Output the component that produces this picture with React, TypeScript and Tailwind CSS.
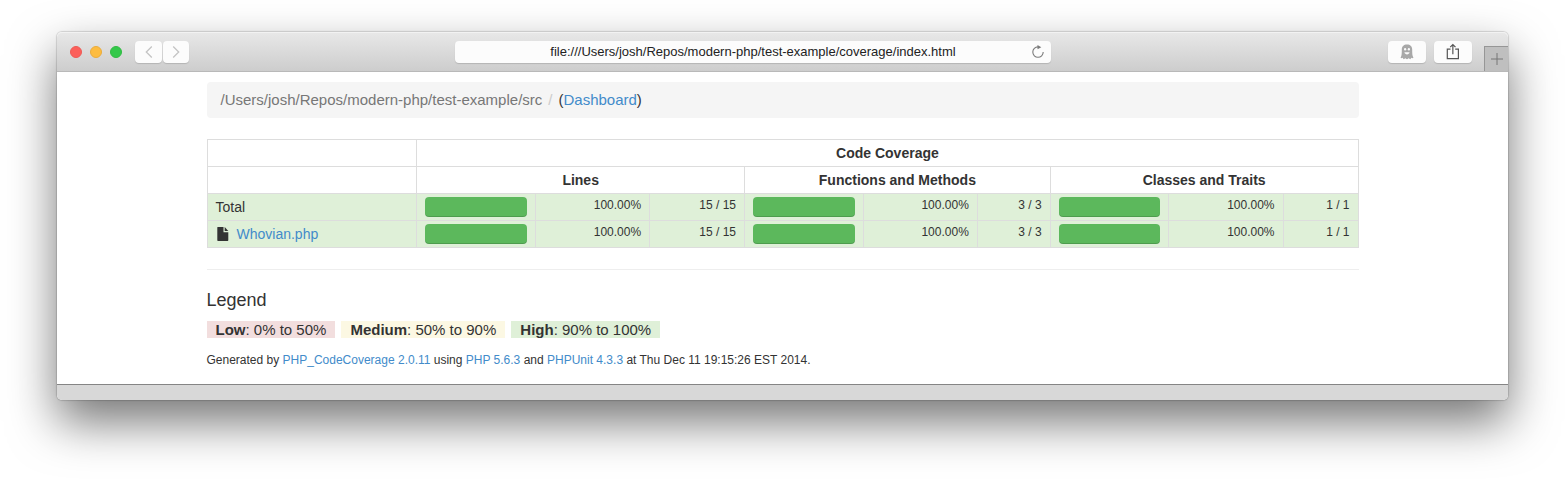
import React from "react";

type Metric = { percent: number; count: string };
type Row = { name: string; file: boolean; metrics: Metric[] };

const rows: Row[] = [
  {
    name: "Total",
    file: false,
    metrics: [
      { percent: 100, count: "15 / 15" },
      { percent: 100, count: "3 / 3" },
      { percent: 100, count: "1 / 1" },
    ],
  },
  {
    name: "Whovian.php",
    file: true,
    metrics: [
      { percent: 100, count: "15 / 15" },
      { percent: 100, count: "3 / 3" },
      { percent: 100, count: "1 / 1" },
    ],
  },
];

const columnShares = [210, 119, 114, 95, 119, 114, 73, 118, 115, 75];
const shareTotal = columnShares.reduce((sum, share) => sum + share, 0);

const link = "text-[#428bca] hover:underline";
const toolButton =
  "flex h-[22px] items-center justify-center rounded bg-[#fcfcfc] shadow-[0_1px_1px_rgba(0,0,0,0.14)]";

function GhostIcon() {
  return (
    <svg width="14" height="16" viewBox="0 0 14 16" aria-hidden="true">
      <path
        fill="#a8a8a8"
        d="M7 .5C3.700.5 1.800 2.500 1.800 5.600c0 2.600 0 4.800-.5 6.500-.2.800-.7 1.500-.7 1.900.7.300 1.400.1 2-.3.300.6.600 1.200 1.200 1.600.7-.2 1.100-.8 1.400-1.300.5.500 1 1.200 1.800 1.200s1.300-.7 1.800-1.200c.3.500.7 1.100 1.400 1.300.6-.4.900-1 1.200-1.600.6.400 1.300.6 2 .3 0-.4-.5-1.100-.7-1.900-.5-1.700-.5-3.900-.5-6.500C12.200 2.500 10.300.5 7 .5Z"
      />
      <ellipse cx="5.100" cy="5.300" rx="1.100" ry="1.200" fill="#fafafa" />
      <ellipse cx="8.900" cy="5.300" rx="1.100" ry="1.200" fill="#fafafa" />
      <path d="M4.400 8.300h5.200C9.300 9.800 8.200 10.400 7 10.400S4.700 9.800 4.400 8.300Z" fill="#fafafa" />
    </svg>
  );
}

function ShareIcon() {
  return (
    <svg width="14" height="18" viewBox="0 0 14 18" fill="none" stroke="#555" strokeWidth="1.200" aria-hidden="true">
      <path d="M4.500 6.100H1.300v9.600h11.100V6.100H9.200" />
      <path d="M6.850 11.300V1.600M4.200 4.200l2.650-2.700L9.500 4.200" />
    </svg>
  );
}

function ReloadIcon() {
  return (
    <svg width="14" height="14" viewBox="0 0 14 14" fill="none" aria-hidden="true">
      <path d="M7 1.900A5.200 5.200 0 1 0 12.200 7.100" stroke="#7a7a7a" strokeWidth="1.100" />
      <path d="M6.500 0v4.200L10.300 2.300Z" fill="#7a7a7a" />
    </svg>
  );
}

function FileIcon() {
  return (
    <svg className="block" width="12" height="14" viewBox="0 0 12 14" fill="#333" aria-hidden="true">
      <path d="M.7 0H6.500v5.200H11.300V13.200a.7.700 0 0 1-.7.700H1a.7.700 0 0 1-.7-.7V.600A.6.600 0 0 1 .7 0Z" />
      <path d="M7.700 0 11.300 4H7.700Z" />
    </svg>
  );
}

function Toolbar() {
  return (
    <header className="grid h-10 grid-cols-[398fr_596fr_457fr] rounded-t-[5px] border-b border-[#b9b9b9] bg-linear-to-b from-[#e8e8e8] to-[#cdcdcd] shadow-[inset_0_1px_0_#f2f2f2]">
      <div className="flex items-center pl-[13px]">
        <div className="flex gap-2">
          <button aria-label="Close" className="size-3 rounded-full border border-[#ee5a55] bg-[#fc605b]" />
          <button aria-label="Minimize" className="size-3 rounded-full border border-[#eaac3c] bg-[#fdbc40]" />
          <button aria-label="Zoom" className="size-3 rounded-full border border-[#30bb42] bg-[#34c84a]" />
        </div>
        <div className="ml-[13px] flex gap-px">
          <button aria-label="Back" className={`${toolButton} w-[27px]`}>
            <svg width="8" height="12" viewBox="0 0 8 12" fill="none" stroke="#c4c4c4" strokeWidth="1.300" aria-hidden="true">
              <path d="M6.800.5 1.300 6l5.500 5.500" />
            </svg>
          </button>
          <button aria-label="Forward" className={`${toolButton} w-[26px]`}>
            <svg width="8" height="12" viewBox="0 0 8 12" fill="none" stroke="#c4c4c4" strokeWidth="1.300" aria-hidden="true">
              <path d="M1.200.5 6.700 6l-5.500 5.500" />
            </svg>
          </button>
        </div>
      </div>
      <div className="flex items-center">
        <div className={`${toolButton} w-full pl-5`}>
          <input
            aria-label="Address"
            type="text"
            defaultValue="file:///Users/josh/Repos/modern-php/test-example/coverage/index.html"
            className="h-full min-w-0 flex-1 bg-transparent text-center text-[13px] text-[#222] outline-none"
          />
          <button aria-label="Reload" className="flex w-5 items-center">
            <ReloadIcon />
          </button>
        </div>
      </div>
      <div className="flex items-center justify-end gap-2">
        <button aria-label="Ghostery" className={`${toolButton} w-[38px]`}>
          <GhostIcon />
        </button>
        <button aria-label="Share" className={`${toolButton} w-[38px]`}>
          <ShareIcon />
        </button>
        <button
          aria-label="New tab"
          className="ml-1 flex h-[25px] w-6 items-center justify-center self-end border-t border-l border-[#969696] bg-[#bfbfbf]"
        >
          <svg width="12" height="12" viewBox="0 0 12 12" stroke="#777" strokeWidth="1" aria-hidden="true">
            <path d="M6 0v12M0 6h12" />
          </svg>
        </button>
      </div>
    </header>
  );
}

function CoverageTable() {
  return (
    <table className="mt-[21px] w-full table-fixed border-collapse border border-[#ddd]">
      <colgroup>
        {columnShares.map((share, index) => (
          <col key={index} style={{ width: `${(share / shareTotal) * 100}%` }} />
        ))}
      </colgroup>
      <thead>
        <tr className="h-[27px]">
          <td className="border border-[#ddd]" />
          <th colSpan={9} className="border border-[#ddd] font-bold">
            Code Coverage
          </th>
        </tr>
        <tr className="h-[27px]">
          <td className="border border-[#ddd]" />
          {["Lines", "Functions and Methods", "Classes and Traits"].map((title) => (
            <th key={title} colSpan={3} className="border border-[#ddd] font-bold">
              {title}
            </th>
          ))}
        </tr>
      </thead>
      <tbody>
        {rows.map((row) => (
          <tr key={row.name} className="bg-[#dff0d8]">
            <td className="border border-[#ddd] px-2 py-[3px]">
              {row.file ? (
                <div className="flex items-center gap-2 pl-px">
                  <FileIcon />
                  <a href="#whovian" className={link}>
                    {row.name}
                  </a>
                </div>
              ) : (
                row.name
              )}
            </td>
            {row.metrics.map((metric, index) => (
              <React.Fragment key={index}>
                <td className="border border-[#ddd] px-2 py-[3px]">
                  <div className="h-5 rounded bg-[#f5f5f5]">
                    <div
                      className="h-full rounded bg-[#5cb85c] shadow-[inset_0_-1px_0_rgba(0,0,0,0.15)]"
                      style={{ width: `${metric.percent}%` }}
                    />
                  </div>
                </td>
                <td className="border border-[#ddd] px-2 py-[3px] text-right align-top text-xs leading-4">
                  {metric.percent.toFixed(2)}%
                </td>
                <td className="border border-[#ddd] px-2 py-[3px] text-right align-top text-xs leading-4">
                  {metric.count}
                </td>
              </React.Fragment>
            ))}
          </tr>
        ))}
      </tbody>
    </table>
  );
}

export default function App() {
  return (
    <div className="bg-white px-[57px] pt-8 pb-20 font-['Liberation_Sans',Arial,sans-serif] text-sm leading-5 text-[#333]">
      <div className="rounded-[5px] bg-white shadow-[0_0_1px_1px_rgba(0,0,0,0.14),0_22px_48px_rgba(0,0,0,0.54)]">
        <Toolbar />
        <main className="mx-auto w-[80%] max-w-[1152px] pt-[10px] pb-[14px]">
          <nav aria-label="Breadcrumb" className="rounded bg-[#f5f5f5] px-[14px] py-2">
            <ol className="flex text-[15px] leading-5">
              <li className="text-[#777]">/Users/josh/Repos/modern-php/test-example/src</li>
              <li aria-hidden="true" className="px-[6px] text-[#ccc]">
                /
              </li>
              <li>
                (
                <a href="#dashboard" className={link}>
                  Dashboard
                </a>
                )
              </li>
            </ol>
          </nav>
          <CoverageTable />
          <footer className="mt-[21px] border-t border-[#eee] pt-5">
            <h4 className="text-lg leading-5 font-medium">Legend</h4>
            <p className="mt-[11px] flex gap-[6px] text-[15px] leading-[17px]">
              <span className="bg-[#f2dede] px-[9px]">
                <b>Low</b>: 0% to 50%
              </span>
              <span className="bg-[#fcf8e3] px-[9px]">
                <b>Medium</b>: 50% to 90%
              </span>
              <span className="bg-[#dff0d8] px-[9px]">
                <b>High</b>: 90% to 100%
              </span>
            </p>
            <p className="mt-3 text-xs leading-5">
              Generated by{" "}
              <a href="#php-code-coverage" className={link}>
                PHP_CodeCoverage 2.0.11
              </a>{" "}
              using{" "}
              <a href="#php" className={link}>
                PHP 5.6.3
              </a>{" "}
              and{" "}
              <a href="#phpunit" className={link}>
                PHPUnit 4.3.3
              </a>{" "}
              at Thu Dec 11 19:15:26 EST 2014.
            </p>
          </footer>
        </main>
        <div className="h-4 rounded-b-[5px] border-t border-[#858585] bg-[#d8d8d8]" />
      </div>
    </div>
  );
}
